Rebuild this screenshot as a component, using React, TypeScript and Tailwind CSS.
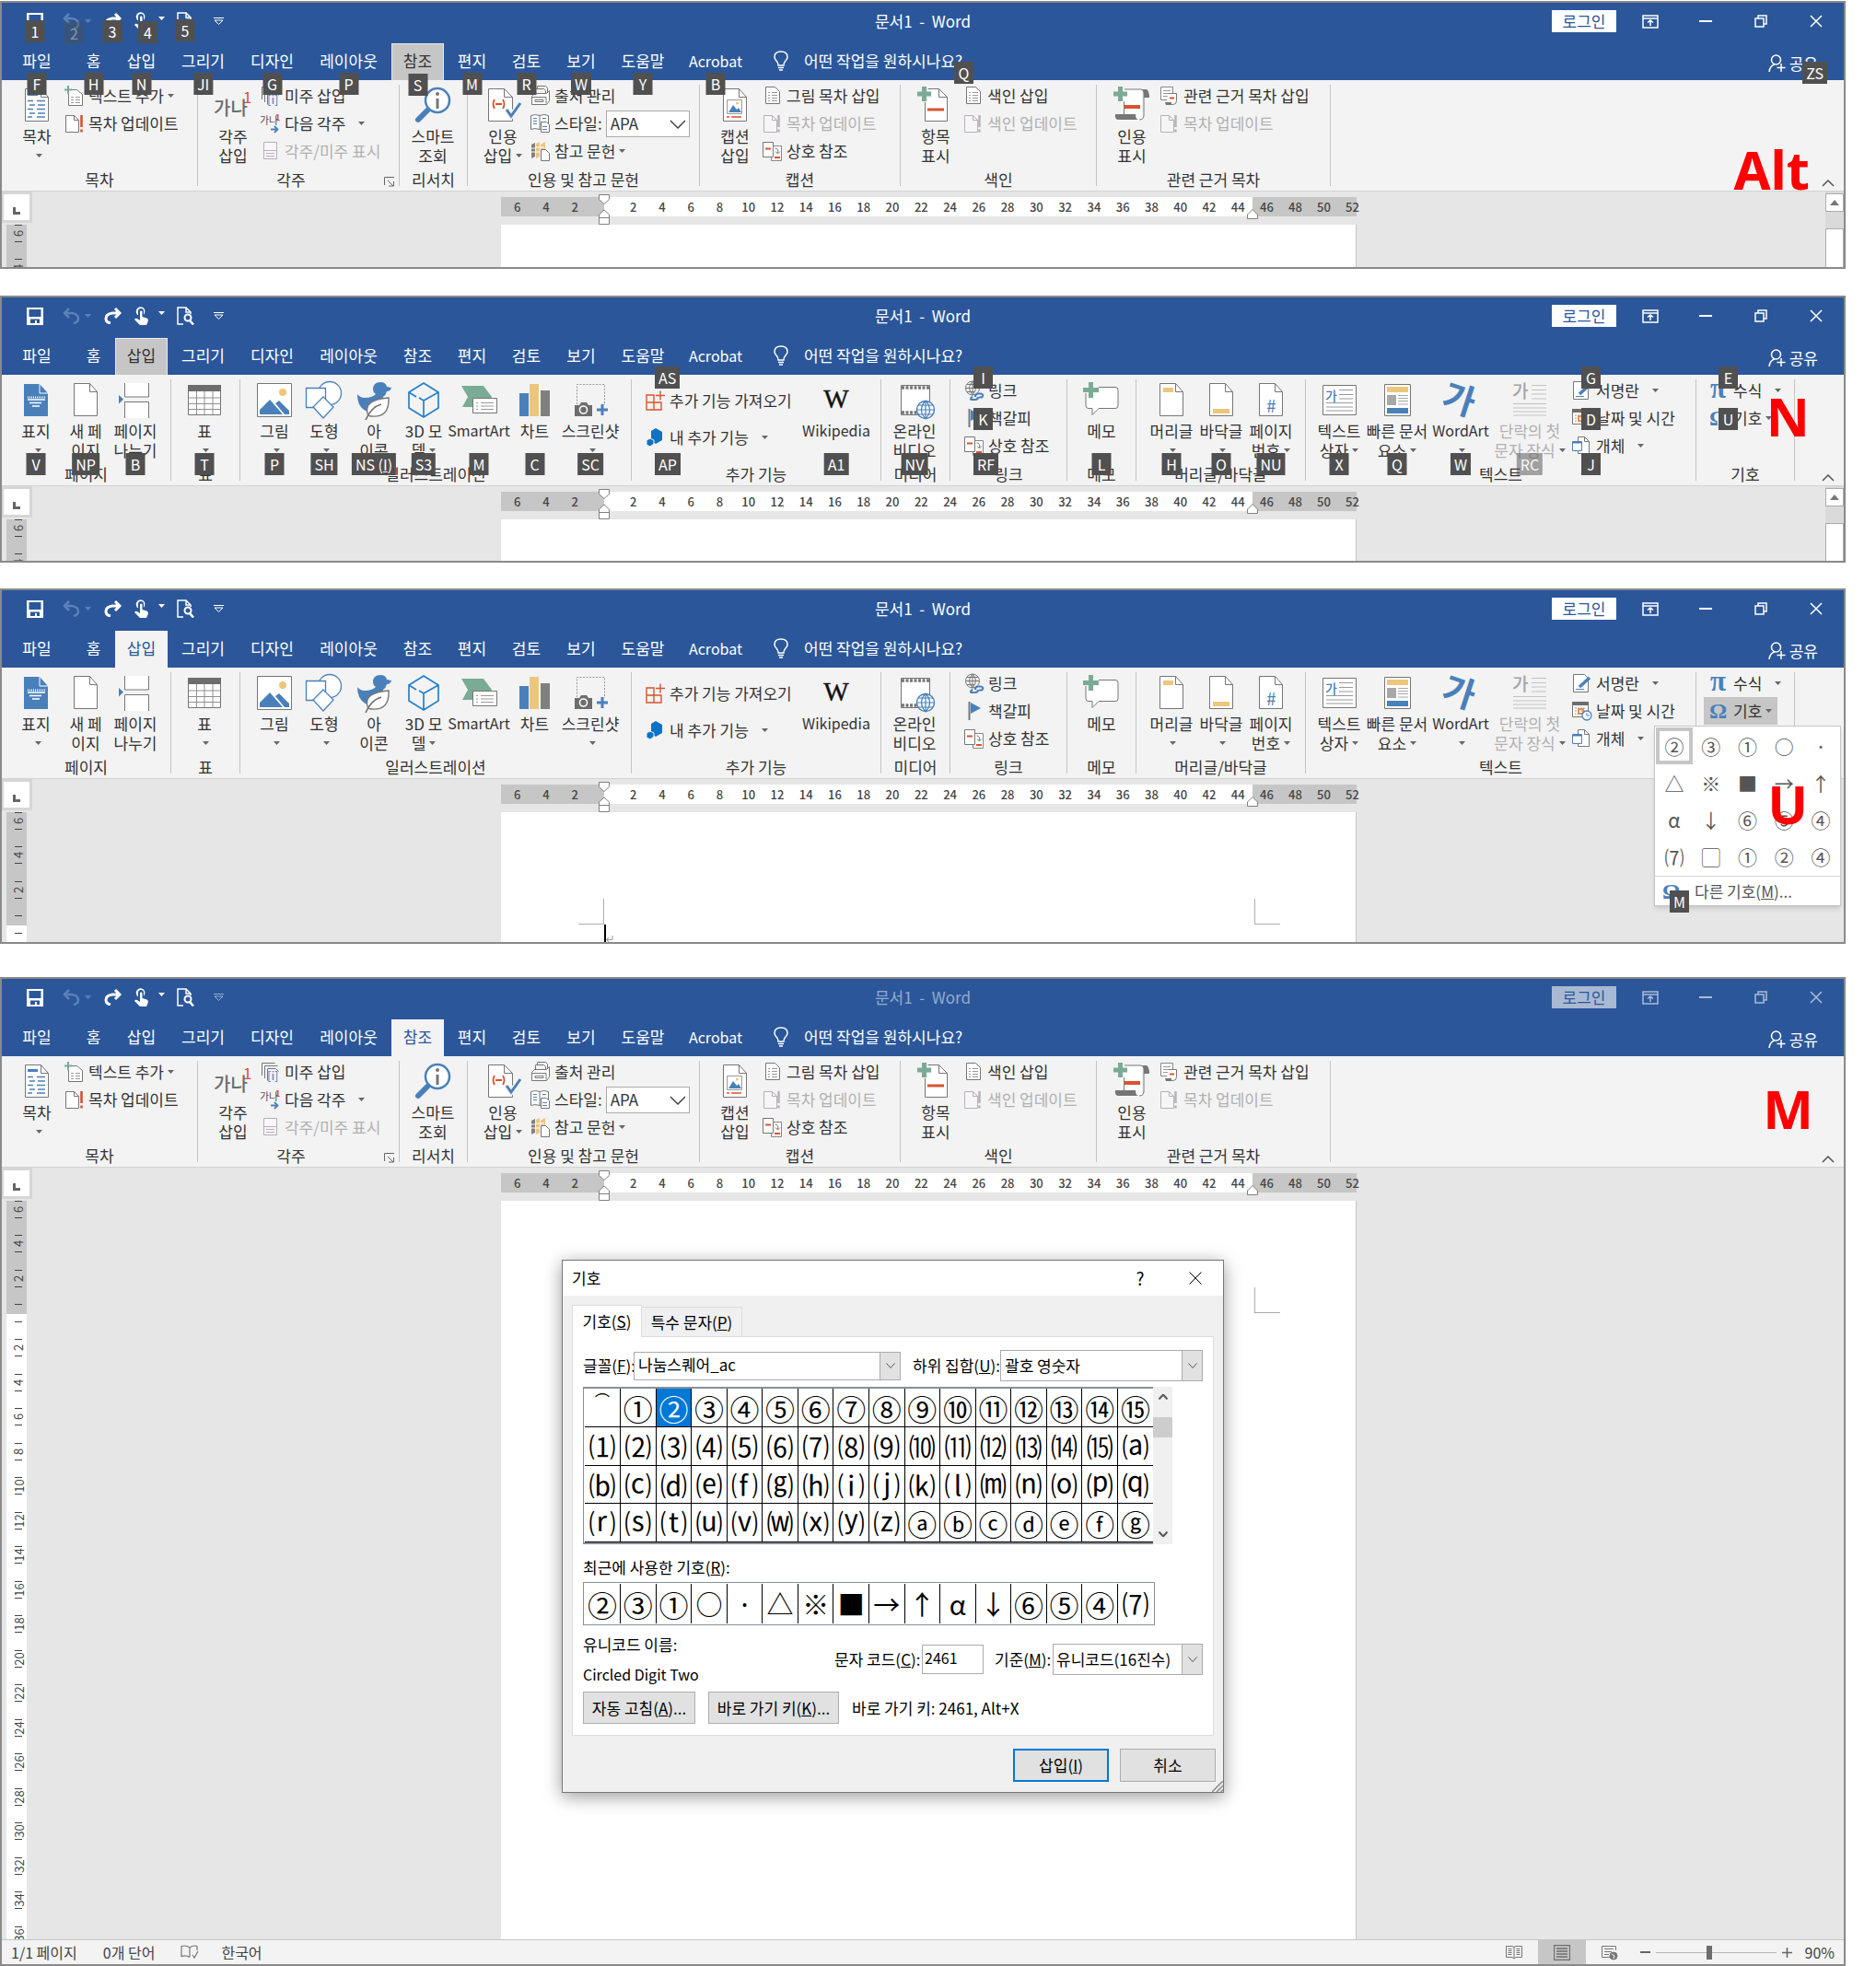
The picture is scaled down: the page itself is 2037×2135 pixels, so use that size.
import type { ReactNode } from "react";

const BLUE = "#4a80ba";
const GRAY = "#767676";
const GREEN = "#7aab95";
const RED = "#d9532f";
const YELLOW = "#edc67c";

const FOLD = "M7.5 2.5h17l8 9v26h-25z";

// 40x40 drawings for the tall ribbon buttons
const big: Record<string, ReactNode> = {
  toc: (
    <g fill="none">
      <path d="M7.5 2.5h17l8 9v26h-25z" fill="#fff" stroke={GRAY} />
      <path d="M24.500 2.500v9h8" stroke={GRAY} />
      <path d="M10 8.500h11" stroke={BLUE} strokeWidth="3" />
      <path d="M10 15.500h6M20 15.500h9M12 20h6M21 20h8M10 24.500h6M20 24.500h9M12 29h6M21 29h8M10 33h5M20 33h9" stroke={BLUE} strokeWidth="1.400" />
    </g>
  ),
  footnote: (
    <g>
      <text x="-1" y="31" fontSize="20" fontWeight="500" fill="#6d6d6d">가나</text>
      <text x="31" y="18" fontSize="17" fill={RED}>1</text>
    </g>
  ),
  lookup: (
    <g fill="none">
      <path d="M4 36 17 23" stroke={BLUE} strokeWidth="6" strokeLinecap="round" />
      <circle cx="25" cy="15" r="13" fill="#fff" stroke={BLUE} strokeWidth="2.500" />
      <path d="M25 13v11" stroke={GRAY} strokeWidth="3" />
      <circle cx="25" cy="8" r="2" fill={GRAY} />
    </g>
  ),
  cite: (
    <g fill="none">
      <path d="M4.500 2.500h17l9 9v26h-26z" fill="#fff" stroke={GRAY} />
      <path d="M21.500 2.500v9h9" stroke={GRAY} />
      <path d="M11 14q-3 5 0 10M20 14q3 5 0 10M12 19h7" stroke={RED} strokeWidth="1.800" />
      <path d="m24 25 5 7 10-14" stroke="#f3f3f3" strokeWidth="6" />
      <path d="m24 25 5 7 10-14" stroke={BLUE} strokeWidth="3" />
    </g>
  ),
  caption: (
    <g fill="none">
      <path d={FOLD} fill="#fff" stroke={GRAY} />
      <path d="M24.500 2.500v9h8" stroke={GRAY} />
      <path d="M11.500 14.500h16v15h-16z" stroke="#999" fill="#fff" />
      <path d="m13 28 5-8 4 5 2-2 3 5z" fill={BLUE} />
      <circle cx="22.500" cy="18" r="1.500" fill={YELLOW} />
      <path d="M11 33h3M16 33h11" stroke={RED} strokeWidth="1.500" />
    </g>
  ),
  mark: (
    <g fill="none">
      <path d="M8.500 2.500h15l9 9v26h-24z" fill="#fff" stroke={GRAY} />
      <path d="M23.500 2.500v9h9" stroke={GRAY} />
      <path d="M-1 8.500H16M8 0v17" stroke="#f3f3f3" strokeWidth="7" />
      <path d="M0 8H15M7.500 0v16" stroke={GREEN} strokeWidth="5" />
      <path d="M11 25h18" stroke={RED} strokeWidth="3" />
    </g>
  ),
  authority: (
    <g fill="none">
      <path d="M11 3h20v28q0 6-5 6H8V3z" fill="#fff" />
      <path d="M11.500 16v15" stroke={GRAY} />
      <path d="M29 3h7q3 2 3 9h-6V6q0-3-4-3z" fill={GRAY} />
      <path d="M2 30h22q0 6 4 6H6q-5 0-4-6z" fill={GRAY} />
      <path d="M12 3h18q3 0 3 4v24q0 5-5 5" stroke={GRAY} />
      <path d="M0 8H15M7.500 0v16" stroke={GREEN} strokeWidth="5" />
      <path d="M12 22h17" stroke={RED} strokeWidth="4" />
    </g>
  ),
  cover: (
    <g fill="none">
      <path d="M7 3h17l9 10v25H7z" fill={BLUE} />
      <path d="M24 3v10h9" stroke="#fff" />
      <path d="M11 17.500h19" stroke="#fff" strokeWidth="2" strokeDasharray="1 1" />
      <path d="M11 20h19M13 23.500h13M16 27h8" stroke="#fff" strokeWidth="1.300" />
    </g>
  ),
  blank: (
    <g fill="none">
      <path d={FOLD} fill="#fff" stroke={GRAY} />
      <path d="M24.500 2.500v9h8" stroke={GRAY} />
    </g>
  ),
  pagebreak: (
    <g fill="none">
      <path d="M8.500 2v15h26V2M8.500 40V22.500h26V40" fill="#fff" stroke={GRAY} />
      <path d="m2 15 5 4.500-5 5z" fill={BLUE} />
    </g>
  ),
  table: (
    <g fill="none">
      <path d="M2.500 4.500h35v32h-35z" fill="#fff" stroke={GRAY} />
      <path d="M2 4h36v7H2z" fill="#6d6d6d" />
      <path d="M11.500 11v25M20 11v25M29 11v25M3 18h34M3 24.500h34M3 30.500h34" stroke="#8f8f8f" />
    </g>
  ),
  picture: (
    <g fill="none">
      <path d="M1.500 2.500h37v36h-37z" fill="#fff" stroke={GRAY} />
      <circle cx="29" cy="12" r="4" fill={YELLOW} />
      <path d="M4 36v-5l11-11 14 16zM21 24l4-3 11 11v4h-5z" fill={BLUE} />
    </g>
  ),
  shapes: (
    <g fill="#fff" stroke={BLUE} strokeWidth="1.300">
      <circle cx="26" cy="13" r="12.500" />
      <path d="M.5 7.500h21v21H.5z" />
      <path d="m19 17 11 11-11 12L8 28z" />
    </g>
  ),
  duck: (
    <g fill="none">
      <path d="M19 9q0-8 8-8 6 0 7 5l5 1q-1 4-5 4-1 4-4 6l-3 14q-6 4-14 2Q2 29 2 14q3 4 8 4 8 0 12-4-3-2-3-5z" fill={BLUE} />
      <path d="M13 35q-4-15 23-17 1 22-19 20-3 0-4-3z" fill="#fff" stroke={GRAY} strokeWidth="1.400" />
      <path d="M11 42q6-14 17-17" stroke={GRAY} strokeWidth="1.800" />
    </g>
  ),
  cube: (
    <path d="m20 2 16 10v17L20 39 4 29V12zM4 12l8 5M36 12l-16 9v18M15 18l5 3" fill="none" stroke="#2480c8" strokeWidth="1.700" />
  ),
  smartart: (
    <g fill="none">
      <path d="M1 5h24l9 12-7 11H2l6-11z" fill={GREEN} />
      <path d="M13.500 18.500h26v16h-26z" fill="#fff" stroke={GRAY} />
      <path d="M17 23.500h2M22 23.500h14M17 27h2M22 27h14M17 30.500h2M22 30.500h14" stroke="#999" />
    </g>
  ),
  chart: (
    <g>
      <path d="M3 13h10v25H3z" fill={BLUE} />
      <path d="M14 3h10v35H14z" fill={YELLOW} />
      <path d="M26 10h10v28H26z" fill="#808080" />
    </g>
  ),
  screenshot: (
    <g fill="none">
      <path d="M5.500 25V3.500h30V26" stroke="#999" strokeDasharray="2 1.500" />
      <path d="M3 26h5l2-3h6l2 3h4v12H3z" fill="#6d6d6d" />
      <circle cx="12.500" cy="31" r="4" stroke="#fff" strokeWidth="1.600" />
      <path d="M27 31h12M33 25v12" stroke={BLUE} strokeWidth="3" />
    </g>
  ),
  wikipedia: <text x="20" y="29" textAnchor="middle" fontSize="29" fontFamily="Liberation Serif, serif" fill="#111" stroke="#111" strokeWidth=".4">W</text>,
  video: (
    <g fill="none">
      <path d="M5.500 4.500h31v32h-31z" fill="#fff" stroke={GRAY} />
      <path d="M6 7h30M6 34h30" stroke="#777" strokeWidth="3.500" strokeDasharray="3 1.500" />
      <circle cx="32" cy="31" r="9.500" fill="#fff" stroke={BLUE} strokeWidth="1.400" />
      <path d="M22 31h20M24 26h16M24 36h16M32 21v20M32 21q-9 10 0 20M32 21q9 10 0 20" stroke={BLUE} strokeWidth="1.200" />
    </g>
  ),
  comment: (
    <g fill="none">
      <path d="M4 6.500h31q3 0 3 3v17q0 3-3 3H17l-7 7v-7H6q-3 0-3-3V9z" fill="#fff" stroke={GRAY} />
      <path d="M-2 9.500H17M8 0v19" stroke="#f3f3f3" strokeWidth="7" />
      <path d="M0 9.500H17M8.500 1v17" stroke={GREEN} strokeWidth="5" />
    </g>
  ),
  header: (
    <g fill="none">
      <path d={FOLD} fill="#fff" stroke={GRAY} />
      <path d="M24.500 2.500v9h8" stroke={GRAY} />
      <path d="M11 7h11v5H11z" fill={YELLOW} />
    </g>
  ),
  footer: (
    <g fill="none">
      <path d={FOLD} fill="#fff" stroke={GRAY} />
      <path d="M24.500 2.500v9h8" stroke={GRAY} />
      <path d="M11 30h18v5H11z" fill={YELLOW} />
    </g>
  ),
  pagenum: (
    <g fill="none">
      <path d={FOLD} fill="#fff" stroke={GRAY} />
      <path d="M24.500 2.500v9h8" stroke={GRAY} />
      <text x="15" y="34" fontSize="19" fill={BLUE}>#</text>
    </g>
  ),
  textbox: (
    <g fill="none">
      <path d="M2.500 4.500h36v32h-36z" fill="#fff" stroke={GRAY} />
      <text x="5" y="21" fontSize="14" fontWeight="500" fill={BLUE}>가</text>
      <path d="M20 9.500h15M20 14.500h15M20 19h15M6 23.500h29M6 28h29M6 32h29" stroke="#999" />
    </g>
  ),
  quick: (
    <g fill="none">
      <path d="M6.500 3.500h28v34h-28z" fill="#fff" stroke={GRAY} />
      <path d="M9 6h23v6H9z" fill={YELLOW} />
      <path d="M9 15h10v11H9z" fill="#a8a8a8" />
      <path d="M9 29h23v6H9z" fill={BLUE} />
      <path d="M21 15.500h11M21 18.500h11M21 21.500h11M21 25h11" stroke="#a8a8a8" />
    </g>
  ),
  wordart: <text x="1" y="34" fontSize="38" fontWeight="700" fill={BLUE} transform="rotate(18 20 20)">가</text>,
  dropcap: (
    <g fill="none">
      <text x="1" y="18" fontSize="19" fontWeight="500" fill="#a5a5a5">가</text>
      <path d="M22 4.500h16M22 9.500h16M22 14h16M22 19h16M2 24.500h36M2 29h36M2 33h36M2 37h36" stroke="#c2c2c2" />
    </g>
  ),
};

// 22x22 drawings for the one-line ribbon buttons
const small: Record<string, ReactNode> = {
  addtext: (
    <g fill="none">
      <path d="M4.500 4.500h9l6 5v12h-15z" fill="#fff" stroke={GRAY} />
      <path d="M7 12.500h3M12 12.500h5M7 15.500h3M12 15.500h5M7 18.500h3M12 18.500h5" stroke="#999" />
      <path d="M0 4.500h8M4 0v9" stroke={GREEN} strokeWidth="2" />
    </g>
  ),
  update: (
    <g fill="none">
      <path d="M1.500 2.500h9l5 5v13h-14z" fill="#fff" stroke={GRAY} />
      <path d="M10.500 2.500v5h5" stroke={GRAY} />
      <path d="M18.500 2v13M18.500 17.500v3" stroke={RED} strokeWidth="2.600" />
    </g>
  ),
  updateOff: (
    <g fill="none">
      <path d="M1.500 2.500h9l5 5v13h-14z" fill="#f8f5f9" stroke="#b5b0b5" />
      <path d="M10.500 2.500v5h5" stroke="#b5b0b5" />
      <path d="M17.500 2v13M17.500 17.500v3" stroke="#b5b0b5" strokeWidth="2.400" />
    </g>
  ),
  endnote: (
    <g fill="none">
      <path d="M1.500 15V1.500h14M4.500 18V4.500h14M7.500 20.500v-13h9l3 3" stroke={GRAY} />
      <text x="7" y="20" fontSize="13" fill={BLUE}>[i]</text>
    </g>
  ),
  nextnote: (
    <g fill="none">
      <text x="-1" y="12" fontSize="11" fill="#555">가나</text>
      <text x="16" y="8" fontSize="9" fontWeight="700" fill={RED}>1</text>
      <path d="M11 17.500h7M15 14l3.500 3.500L15 21" stroke={BLUE} strokeWidth="1.800" />
    </g>
  ),
  shownote: (
    <g fill="none" stroke="#b5b0b5">
      <path d="M3.500 1.500h14v18h-14z" fill="#faf5fa" />
      <path d="M4 10.500h13M6 13.500h9M6 16.500h9" />
    </g>
  ),
  sources: (
    <g fill="none" stroke={GRAY}>
      <path d="M5.500 8V3.500h9l2 2V9M7.500 3V.5h9l2 2V8" />
      <path d="M1.500 11.500l3-3h13l3-3v11l-3 4h-16z" fill="#fff" />
      <path d="M2 12.500h15v7M5 15.500h9v2H5z" />
    </g>
  ),
  style: (
    <g fill="none" stroke={GRAY}>
      <path d="M.5 2.500q5-2 9.500 0 5-2 9.500 0v15q-5-2-9.500 0-5-2-9.500 0zM10 2.500v15" fill="#fff" />
      <path d="M3 5.500h4M3 8.500h4M3 11.500h4M13 5.500h4" stroke={BLUE} />
      <path d="M11.500 9.500h6l3 3v8h-9z" fill="#fff" />
      <path d="M13 14.500h5M13 17.500h5" stroke={BLUE} />
    </g>
  ),
  biblio: (
    <g fill="none">
      <path d="M1 4l4-2v15l-4 2z" fill="#808080" />
      <path d="M6 3l4-2v16l-4 2zM11 4l5-3v9h-5z" fill={YELLOW} />
      <path d="M1 8h4M1 12h4M6 7h9M6 12h4" stroke="#fff" />
      <path d="M11.500 9.500h5l4 4v8h-9z" fill="#fff" stroke={GRAY} />
    </g>
  ),
  list: (
    <g fill="none">
      <path d="M3.500 1.500h10l5 5v13h-15z" fill="#fff" stroke={GRAY} />
      <path d="M6 7.500h2M10 7.500h6M6 10.500h2M10 10.500h6M6 13.500h2M10 13.500h6M6 16.500h2M10 16.500h6" stroke="#999" />
    </g>
  ),
  crossref: (
    <g fill="none">
      <path d="M9.500 5.500h11v16h-11z" fill="#fff" stroke="#888" />
      <path d="M.5 1.500h11v16H.5z" fill="#fff" stroke={GRAY} />
      <path d="M3 8.500h6M13 18h6" stroke={RED} strokeWidth="2" />
      <path d="M13.500 8q4 0 3 5M14 11.500l2.500 2.500 2.500-2.500" stroke={GRAY} />
    </g>
  ),
  authtable: (
    <g fill="none">
      <path d="M1.500 1.500h13v14h-13z" fill="#fff" stroke="#888" />
      <path d="M4 5.500h8M4 8.500h6M4 11.500h5" stroke="#999" />
      <path d="M9.500 8.500h9v8q0 4-4 4h-7" fill="#fff" stroke={GRAY} />
      <path d="M11 13.500h5" stroke={RED} strokeWidth="2" />
      <path d="M6 18h7v3H7z" fill={GRAY} />
    </g>
  ),
  store: (
    <g fill="none" stroke={RED} strokeWidth="1.400">
      <path d="M1 5h8v16H1zM1 13h16v8H1zM9 13v8M9 5v8" />
      <path d="M11 5.500h10M16 .5v10" />
    </g>
  ),
  myaddin: (
    <g fill="#0f72c4">
      <path d="m11 1 7 4v9l-7 4-5-3V4z" />
      <path d="m5 12 4 2v4l-4 3-4-2v-5z" stroke="#f3f3f3" />
    </g>
  ),
  link: (
    <g fill="none">
      <circle cx="9" cy="8.500" r="7.500" stroke={GRAY} />
      <path d="M1.500 8.500h15M3 4.500h12M3 12.500h8M9 1v14M9 1q-7 7 0 15M9 1q7 7 0 15" stroke={GRAY} />
      <path d="M9 17.500q-4 3.500 0 3.500h3q3 0 3-3M15 14.500h3q4 1 1 4l-3 0M12 18q0-3.500 3-3.500" stroke={BLUE} strokeWidth="2.200" />
    </g>
  ),
  bookmark: (
    <g>
      <path d="M5.500 1v20" stroke={GRAY} strokeWidth="2" />
      <path d="m7 2 11 6-11 6z" fill={BLUE} />
    </g>
  ),
  sign: (
    <g fill="none">
      <path d="M1.500 1.500h12l4 4v15h-16z" fill="#fff" stroke={GRAY} />
      <path d="M4 17.500h9" stroke={BLUE} />
      <path d="M8 15 19 5" stroke={BLUE} strokeWidth="3.500" />
    </g>
  ),
  date: (
    <g fill="none">
      <path d="M.5 1.500h17v16H.5z" fill="#fff" stroke={GRAY} />
      <path d="M0 1h18v4H0z" fill="#6d6d6d" />
      <path d="M3 8h12M3 11h12M3 14h12" stroke="#999" strokeDasharray="2 1" />
      <path d="M7 9h5v5H7z" stroke="#e87722" strokeWidth="1.500" />
      <circle cx="16" cy="16" r="5" fill="#fff" stroke={BLUE} strokeWidth="1.300" />
      <path d="M16 13v3h3" stroke={BLUE} />
    </g>
  ),
  object: (
    <g fill="none">
      <path d="M6.500 1.500h7l5 5v13h-12z" fill="#fff" stroke={GRAY} />
      <path d="M13.500 1.500v5h5" stroke={GRAY} />
      <path d="M.5 6.500h10v10H.5z" fill="#fff" stroke={BLUE} />
      <path d="M1 7.500h9" stroke={BLUE} strokeWidth="2" />
    </g>
  ),
  pi: <text x="1" y="19" fontSize="31" fontWeight="700" fontFamily="Liberation Serif, serif" fill={BLUE}>π</text>,
  omega: <text x="0" y="19" fontSize="24" fontWeight="700" fontFamily="Liberation Serif, serif" fill={BLUE}>Ω</text>,
};

function Big({ name }: { name: string }) {
  return <svg viewBox="0 0 40 40" className="h-10 w-10 shrink-0 overflow-visible" aria-hidden="true">{big[name]}</svg>;
}

function Small({ name }: { name: string }) {
  return <svg viewBox="0 0 22 22" className="h-[22px] w-[22px] shrink-0 overflow-visible" aria-hidden="true">{small[name]}</svg>;
}

function Caret({ className = "" }: { className?: string }) {
  return (
    <svg viewBox="0 0 7 4" className={`inline-block h-1 w-[7px] shrink-0 fill-current ${className}`} aria-hidden="true">
      <path d="M0 0h7L3.500 4z" />
    </svg>
  );
}

function KeyTip({ text, className = "" }: { text: ReactNode; className?: string }) {
  return (
    <kbd className={`absolute z-20 flex h-6 min-w-[21px] items-center justify-center whitespace-nowrap bg-[#505050] px-1 font-[inherit] text-base leading-6 text-white ${className}`}>
      {text}
    </kbd>
  );
}

// Latin captions are set one size down next to Hangul ones
const isLatin = (s: string) => /^[A-Za-z]+$/.test(s);

type LargeProps = { icon: string; lines: string[]; caret?: boolean; off?: boolean; tip?: ReactNode; width?: string };

function LargeButton({ icon, lines, caret, off, tip, width = "w-[60px]" }: LargeProps) {
  return (
    <button type="button" disabled={off} className={`relative flex h-[98px] shrink-0 flex-col items-center pt-[7px] ${width} ${off ? "text-[#b1b1b1]" : "text-[#333]"}`}>
      <Big name={icon} />
      <span className="mt-[3px] flex flex-col items-center whitespace-nowrap text-[17px] leading-[21px]">
        {lines.map((line, i) => (
          <span key={line} className={`flex items-center gap-1 ${isLatin(line) ? "text-base leading-[21px]" : ""}`}>
            {line}
            {caret && lines.length > 1 && i === lines.length - 1 && <Caret className="text-[#666]" />}
          </span>
        ))}
        {caret && lines.length === 1 && <span className="flex h-[21px] items-center pl-1"><Caret className="text-[#666]" /></span>}
      </span>
      {tip && <KeyTip text={tip} className={`top-[85px] left-1/2 -translate-x-1/2 ${off ? "opacity-50" : ""}`} />}
    </button>
  );
}

type SmallProps = { icon: string; label: string; caret?: "near" | "far"; off?: boolean; active?: boolean; tip?: string; tipClass?: string; tall?: boolean };

function SmallButton({ icon, label, caret, off, active, tip, tipClass = "", tall }: SmallProps) {
  return (
    <button type="button" disabled={off} className={`relative flex items-center gap-1 self-start whitespace-nowrap text-[17px] ${tall ? "h-10" : "h-[30px]"} ${off ? "text-[#b1b1b1]" : "text-[#333]"} ${active ? "-mx-1.5 bg-[#c6c6c6] px-1.5" : ""}`}>
      <Small name={icon} />
      <span>{label}</span>
      {caret && <Caret className={`text-[#666] ${caret === "far" ? "ml-2.5" : ""}`} />}
      {tip && <KeyTip text={tip} className={`left-2.5 ${tipClass}`} />}
    </button>
  );
}

function Group({ label, width, pad = "pl-2", launcher, children }: { label: string; width: string; pad?: string; launcher?: boolean; children: ReactNode }) {
  return (
    <section className={`relative flex shrink-0 ${width}`} aria-label={label}>
      <div className="flex min-w-0 flex-1 flex-col">
        <div className={`flex h-[98px] ${pad}`}>{children}</div>
        <div className="flex h-5 items-center text-[17px] text-[#333]">
          <span className="flex-1 whitespace-nowrap text-center">{label}</span>
          {launcher && (
            <button type="button" aria-label={`${label} 설정`} className="mt-1 mr-0.5 h-[14px] w-[14px]">
              <svg viewBox="0 0 12 12" className="h-3 w-3 fill-none stroke-[#666]"><path d="M.5 10V1.500H11M4 5l6 6M10.500 6v5H5" /></svg>
            </button>
          )}
        </div>
      </div>
      <div className="mt-[5px] h-[110px] w-px bg-[#c4c4c4]" />
    </section>
  );
}

function Col({ children, className = "pt-0.5" }: { children: ReactNode; className?: string }) {
  return <div className={`flex flex-col ${className}`}>{children}</div>;
}

function References({ id }: { id: string }) {
  return (
    <>
      <Group label="목차" width="w-[213px]">
        <LargeButton icon="toc" lines={["목차"]} caret />
        <Col>
          <SmallButton icon="addtext" label="텍스트 추가" caret="near" />
          <SmallButton icon="update" label="목차 업데이트" />
        </Col>
      </Group>
      <Group label="각주" width="w-[219px]" launcher>
        <LargeButton icon="footnote" lines={["각주", "삽입"]} />
        <Col>
          <SmallButton icon="endnote" label="미주 삽입" />
          <SmallButton icon="nextnote" label="다음 각주" caret="far" />
          <SmallButton icon="shownote" label="각주/미주 표시" off />
        </Col>
      </Group>
      <Group label="리서치" width="w-[74px]" pad="pl-1.5">
        <LargeButton icon="lookup" lines={["스마트", "조회"]} />
      </Group>
      <Group label="인용 및 참고 문헌" width="w-[252px]">
        <LargeButton icon="cite" lines={["인용", "삽입"]} caret />
        <Col>
          <SmallButton icon="sources" label="출처 관리" />
          <div className="flex h-[30px] items-center gap-1 text-[17px] text-[#333]">
            <Small name="style" />
            <label htmlFor={id} className="whitespace-nowrap">스타일:</label>
            <span className="relative">
              <select id={id} className="h-[29px] w-[91px] appearance-none border border-[#ababab] bg-white px-1">
                <option>APA</option>
              </select>
              <svg viewBox="0 0 18 10" className="pointer-events-none absolute top-2.5 right-1 h-2.5 w-[18px] fill-none stroke-[#444] stroke-[1.5]"><path d="m1 1 8 8 8-8" /></svg>
            </span>
          </div>
          <SmallButton icon="biblio" label="참고 문헌" caret="near" />
        </Col>
      </Group>
      <Group label="캡션" width="w-[218px]">
        <LargeButton icon="caption" lines={["캡션", "삽입"]} />
        <Col>
          <SmallButton icon="list" label="그림 목차 삽입" />
          <SmallButton icon="updateOff" label="목차 업데이트" off />
          <SmallButton icon="crossref" label="상호 참조" />
        </Col>
      </Group>
      <Group label="색인" width="w-[213px]">
        <LargeButton icon="mark" lines={["항목", "표시"]} />
        <Col>
          <SmallButton icon="list" label="색인 삽입" />
          <SmallButton icon="updateOff" label="색인 업데이트" off />
        </Col>
      </Group>
      <Group label="관련 근거 목차" width="w-[254px]">
        <LargeButton icon="authority" lines={["인용", "표시"]} />
        <Col>
          <SmallButton icon="authtable" label="관련 근거 목차 삽입" />
          <SmallButton icon="updateOff" label="목차 업데이트" off />
        </Col>
      </Group>
    </>
  );
}

const popupSymbols = ["②", "③", "①", "○", "·", "△", "※", "■", "→", "↑", "α", "↓", "⑥", "⑤", "④", "⑺", "▢", "①", "②", "④"];

function SymbolMenu() {
  return (
    <div className="absolute top-[63px] -left-[46px] z-30 w-[203px] border border-[#c6c6c6] bg-white shadow-md">
      <div className="grid grid-cols-5 p-px">
        {popupSymbols.map((s, i) => (
          <button key={i} type="button" className={`flex h-10 items-center justify-center text-[21px] leading-none text-[#555] ${i === 0 ? "border-4 border-[#c6c6c6]" : ""}`}>{s}</button>
        ))}
      </div>
      <button type="button" className="relative flex h-8 w-full items-center gap-[13px] border-t border-[#d6d6d6] pl-2 text-[17px] text-[#555]">
        <Small name="omega" />
        <span>다른 기호(<u>M</u>)...</span>
        <KeyTip text="M" className="top-[15px] left-4" />
      </button>
    </div>
  );
}

function Insert({ tips, open }: { tips?: boolean; open?: boolean }) {
  const t = (s: ReactNode) => (tips ? s : undefined);
  const k = (s: string) => (tips ? s : undefined);
  return (
    <>
      <Group label="페이지" width="w-[184px]" pad="pl-2.5">
        <LargeButton icon="cover" lines={["표지"]} caret tip={t("V")} width="w-[54px]" />
        <LargeButton icon="blank" lines={["새 페", "이지"]} tip={t("NP")} width="w-[54px]" />
        <LargeButton icon="pagebreak" lines={["페이지", "나누기"]} tip={t("B")} width="w-[54px]" />
      </Group>
      <Group label="표" width="w-[75px]" pad="pl-1.5">
        <LargeButton icon="table" lines={["표"]} caret tip={t("T")} />
      </Group>
      <Group label="일러스트레이션" width="w-[425px]" pad="pl-2.5">
        <LargeButton icon="picture" lines={["그림"]} caret tip={t("P")} width="w-[54px]" />
        <LargeButton icon="shapes" lines={["도형"]} caret tip={t("SH")} width="w-[54px]" />
        <LargeButton icon="duck" lines={["아", "이콘"]} tip={t(<>NS (<u>I</u>)</>)} width="w-[54px]" />
        <LargeButton icon="cube" lines={["3D 모", "델"]} caret tip={t("S3")} width="w-[54px]" />
        <LargeButton icon="smartart" lines={["SmartArt"]} tip={t("M")} width="w-[66px]" />
        <LargeButton icon="chart" lines={["차트"]} tip={t("C")} width="w-[55px]" />
        <LargeButton icon="screenshot" lines={["스크린샷"]} caret tip={t("SC")} width="w-[66px]" />
      </Group>
      <Group label="추가 기능" width="w-[271px]" pad="pl-[15px]">
        <Col className="w-[174px] pt-2">
          <SmallButton icon="store" label="추가 기능 가져오기" tall tip={k("AS")} tipClass="-top-[17px]" />
          <SmallButton icon="myaddin" label="내 추가 기능" caret="far" tall tip={k("AP")} tipClass="top-[37px]" />
        </Col>
        <LargeButton icon="wikipedia" lines={["Wikipedia"]} tip={t("A1")} width="w-[66px]" />
      </Group>
      <Group label="미디어" width="w-[75px]" pad="pl-1.5">
        <LargeButton icon="video" lines={["온라인", "비디오"]} tip={t("NV")} />
      </Group>
      <Group label="링크" width="w-[127px]" pad="pl-[15px]">
        <Col className="pt-0.5">
          <SmallButton icon="link" label="링크" tip={k("I")} tipClass="-top-[11px]" />
          <SmallButton icon="bookmark" label="책갈피" tip={k("K")} tipClass="top-1" />
          <SmallButton icon="crossref" label="상호 참조" tip={k("RF")} tipClass="top-[23px]" />
        </Col>
      </Group>
      <Group label="메모" width="w-[75px]" pad="pl-[7px]">
        <LargeButton icon="comment" lines={["메모"]} tip={t("L")} />
      </Group>
      <Group label="머리글/바닥글" width="w-[184px]" pad="pl-[11px]">
        <LargeButton icon="header" lines={["머리글"]} caret tip={t("H")} width="w-[54px]" />
        <LargeButton icon="footer" lines={["바닥글"]} caret tip={t("O")} width="w-[54px]" />
        <LargeButton icon="pagenum" lines={["페이지", "번호"]} caret tip={t("NU")} width="w-[54px]" />
      </Group>
      <Group label="텍스트" width="w-[424px]" pad="pl-[9px]">
        <LargeButton icon="textbox" lines={["텍스트", "상자"]} caret tip={t("X")} width="w-[54px]" />
        <LargeButton icon="quick" lines={["빠른 문서", "요소"]} caret tip={t("Q")} width="w-[72px]" />
        <LargeButton icon="wordart" lines={["WordArt"]} caret tip={t("W")} width="w-[66px]" />
        <LargeButton icon="dropcap" lines={["단락의 첫", "문자 장식"]} caret off tip={t("RC")} width="w-[84px]" />
        <Col className="pt-0.5 pl-1">
          <SmallButton icon="sign" label="서명란" caret="far" tip={k("G")} tipClass="-top-[11px]" />
          <SmallButton icon="date" label="날짜 및 시간" tip={k("D")} tipClass="top-1" />
          <SmallButton icon="object" label="개체" caret="far" tip={k("J")} tipClass="top-[23px]" />
        </Col>
      </Group>
      <Group label="기호" width="w-[107px]" pad="pl-[14px]">
        <Col className="pt-0.5">
          <SmallButton icon="pi" label="수식" caret="far" tip={k("E")} tipClass="-top-[11px]" />
          <SmallButton icon="omega" label="기호" caret="near" active={open} tip={k("U")} tipClass="top-1" />
        </Col>
        {open && <SymbolMenu />}
      </Group>
    </>
  );
}

type Tab = { name: string; width: string; tip: string };

const tabs: Tab[] = [
  { name: "파일", width: "w-[76px]", tip: "F" },
  { name: "홈", width: "w-[43px]", tip: "H" },
  { name: "삽입", width: "w-[57px]", tip: "N" },
  { name: "그리기", width: "w-[73px]", tip: "JI" },
  { name: "디자인", width: "w-[73px]", tip: "G" },
  { name: "레이아웃", width: "w-[89px]", tip: "P" },
  { name: "참조", width: "w-[57px]", tip: "S" },
  { name: "편지", width: "w-[57px]", tip: "M" },
  { name: "검토", width: "w-[57px]", tip: "R" },
  { name: "보기", width: "w-[58px]", tip: "W" },
  { name: "도움말", width: "w-[72px]", tip: "Y" },
  { name: "Acrobat", width: "w-[82px]", tip: "B" },
];

function QuickAccess({ tips, inactive }: { tips?: boolean; inactive?: boolean }) {
  return (
    <div className="flex h-full flex-1 items-center text-white">
      <button type="button" aria-label="저장" className="relative ml-3 flex w-12 justify-center">
        <svg viewBox="0 0 18 19" className="h-[19px] w-[18px]"><path d="M0 0h18v19H0zM2.500 2v8h13V2zM4 12.500V17h5v-3h2v3h3v-4.500z" fill="currentColor" fillRule="evenodd" /></svg>
        {tips && <KeyTip text="1" className="top-2 left-1/2 -translate-x-1/2" />}
      </button>
      <button type="button" aria-label="실행 취소" disabled className="relative flex w-[30px] justify-center text-[#5d80b9]">
        <svg viewBox="0 0 19 18" className="h-[18px] w-[19px] fill-none stroke-current stroke-[2.500]"><path d="M7 1 2 6l5 5M2 6h8q7 1 7 6 0 4-5 5" /></svg>
        {tips && <KeyTip text="2" className="top-2.5 left-2 bg-[#505050]/40 text-white/40" />}
      </button>
      <span className="w-2 text-[#5d80b9]"><Caret className="mb-1.5" /></span>
      <button type="button" aria-label="다시 실행" className="relative flex w-11 justify-center">
        <svg viewBox="0 0 19 18" className="h-[18px] w-[19px] fill-none stroke-current stroke-[3]"><path d="m12 1 5 5-5 5M17 6H9Q2 7 2 12q0 4 5 5" /></svg>
        {tips && <KeyTip text="3" className="top-2 left-1/2 -translate-x-1/2" />}
      </button>
      <button type="button" aria-label="터치/마우스 모드" className="relative flex w-5 justify-center">
        <svg viewBox="0 0 16 20" className="h-5 w-4 fill-current"><path d="M3 9Q0 4 4 1q5-2 7 2 1 3-1 6V5q0-3-3-3T4 5v4z" /><path d="M6 5q1-1 2.500 0v6l5 1.500q2 1 1 4L13 20H6l-6-6q1-2 3-1l3 2z" /></svg>
        {tips && <KeyTip text="4" className="top-2.5 left-1.5" />}
      </button>
      <span className="flex w-[22px] justify-center"><Caret className="mb-1.5" /></span>
      <button type="button" aria-label="인쇄 미리 보기" className="relative flex w-[30px] justify-center">
        <svg viewBox="0 0 19 20" className="h-5 w-[19px] fill-none stroke-current stroke-[1.500]"><path d="M7 19H1V1h9l5 5v2M10 1v5h4" /><circle cx="12" cy="12" r="3.500" strokeWidth="2" /><path d="m14 15 4 4.500" strokeWidth="2.500" /></svg>
        {tips && <KeyTip text="5" className="top-2 left-1/2 -translate-x-1/2" />}
      </button>
      <button type="button" aria-label="빠른 실행 도구 모음 사용자 지정" className={`flex w-[42px] justify-center ${inactive ? "text-white/50" : ""}`}>
        <svg viewBox="0 0 11 8" className="h-2 w-[11px] fill-none stroke-current"><path d="M0 .5h11M1 3h9L5.500 7.500z" /></svg>
      </button>
    </div>
  );
}

function TitleBar({ tips, inactive }: { tips?: boolean; inactive?: boolean }) {
  const control = "flex h-full w-[60px] items-center justify-center";
  return (
    <header className="flex h-11 items-center bg-[#2b579a] pb-1 text-[17px] text-white">
      <QuickAccess tips={tips} inactive={inactive} />
      <h2 className={`whitespace-pre pb-px text-center ${inactive ? "text-white/50" : ""}`}>{"문서1  -  Word"}</h2>
      <div className={`flex h-full flex-1 items-center justify-end ${inactive ? "text-white/60" : ""}`}>
        <button type="button" className={`mr-[7px] flex h-6 w-[70px] items-center justify-center pb-px leading-6 text-[#2b579a] ${inactive ? "bg-[#a9b9d3]" : "bg-white"}`}>로그인</button>
        <button type="button" aria-label="리본 메뉴 표시 옵션" className={control}>
          <svg viewBox="0 0 18 15" className="h-[15px] w-[18px] fill-none stroke-current stroke-[1.500]"><path d="M1 1h16v13H1zM1 4h16M9 12V6M6 8.500 9 6l3 2.500" /></svg>
        </button>
        <button type="button" aria-label="최소화" className={control}><span className="h-[2px] w-[14px] bg-current" /></button>
        <button type="button" aria-label="이전 크기로 복원" className={control}>
          <svg viewBox="0 0 14 14" className="h-[14px] w-[14px] fill-none stroke-current stroke-[1.500]"><path d="M1 4h9v9H1zM4 4V1h9v9h-3" /></svg>
        </button>
        <button type="button" aria-label="닫기" className={control}>
          <svg viewBox="0 0 14 14" className="h-[14px] w-[14px] fill-none stroke-current stroke-[1.500]"><path d="m1 1 12 12M13 1 1 13" /></svg>
        </button>
      </div>
    </header>
  );
}

function TabRow({ active, pressed, tips }: { active: string; pressed?: boolean; tips?: boolean }) {
  return (
    <nav className="flex h-10 gap-0.5 bg-[#2b579a] text-[17px] text-white">
      {tabs.map((tab) => {
        const look = tab.name !== active ? "" : pressed ? "border border-b-0 border-[#e8e8e8] bg-[#c6c6c6] text-[#333]" : "bg-[#f3f3f3] text-[#2b579a]";
        return (
          <button key={tab.name} type="button" className={`relative flex shrink-0 items-center justify-center pb-[3px] ${tab.width} ${isLatin(tab.name) ? "text-base" : ""} ${look}`}>
            {tab.name}
            {tips && <KeyTip text={tab.tip} className="top-8 left-1/2 -translate-x-1/2" />}
          </button>
        );
      })}
      <label className="relative ml-5 flex items-center gap-[17px] pb-[3px]">
        <svg viewBox="0 0 16 22" className="h-[22px] w-4 fill-none stroke-current stroke-[1.500]"><path d="M5 16q0-3-2-5Q1 9 1 7q0-6 7-6t7 6q0 2-2 4t-2 5zM5 18.500h6M6 21h4" /></svg>
        <input type="text" aria-label="어떤 작업을 원하시나요?" placeholder="어떤 작업을 원하시나요?" className="w-[184px] bg-transparent placeholder:text-white" />
        {tips && <KeyTip text="Q" className="top-5 right-0" />}
      </label>
      <button type="button" className="relative mt-1 ml-auto flex items-center gap-1 pr-7">
        <svg viewBox="0 0 19 20" className="h-5 w-[19px] fill-none stroke-current stroke-[1.500]"><circle cx="8.500" cy="6" r="5" /><path d="M1 19q1-7 6-8M14 10v9M9.500 14.500h9" /></svg>
        공유
        {tips && <KeyTip text="ZS" className="top-4 right-[18px]" />}
      </button>
    </nav>
  );
}

function RulerCells({ from, to, className, cell = "flex-1" }: { from: number; to: number; className: string; cell?: string }) {
  const step = from <= to ? 2 : -2;
  const nums = Array.from({ length: Math.abs(to - from) / 2 + 1 }, (_, i) => from + i * step);
  return (
    <div className={`flex items-center ${className}`}>
      {nums.map((n) => <span key={n} className={`text-center ${cell}`}>{n}</span>)}
    </div>
  );
}

function HorizontalRuler() {
  return (
    <div className="relative mt-1.5 flex h-[21px] w-[929px] text-[13px] leading-none font-medium text-[#444]">
      <RulerCells from={6} to={2} className="w-28 bg-[#c6c6c6] pr-4 pl-0.5" />
      <RulerCells from={2} to={44} className="w-[704px] bg-white pl-4" />
      <RulerCells from={46} to={52} className="w-[113px] bg-[#c6c6c6]" cell="w-[31px] shrink-0" />
      <svg viewBox="0 0 12 33" className="absolute -top-[3px] left-[106px] h-[33px] w-3 fill-white stroke-[#808080]">
        <path d="M.5.5h11v5L6 10.500.5 5.500zM6 17l5.500 5v10.500H.5V22zM.5 25.500h11" />
      </svg>
      <svg viewBox="0 0 12 11" className="absolute top-[13px] left-[810px] h-[11px] w-3 fill-white stroke-[#808080]">
        <path d="M6 .5 11.500 6v4.500H.5V6z" />
      </svg>
    </div>
  );
}

function VerticalCell({ n }: { n?: number }) {
  return (
    <div className="flex min-h-[37px] flex-1 flex-col items-center pl-1">
      <span className="h-px w-2 shrink-0 bg-[#444]" />
      <span className="flex h-[17px] items-center justify-center">
        {n !== undefined && <span className="-rotate-90 text-[13px] leading-none">{n}</span>}
      </span>
      <span className="h-px w-2 shrink-0 bg-[#444]" />
    </div>
  );
}

function VerticalRuler({ full }: { full?: boolean }) {
  return (
    <div className="ml-[5px] flex w-[22px] flex-col text-[#444]">
      <div className="flex h-[123px] shrink-0 flex-col bg-[#c6c6c6]">
        <VerticalCell n={6} />
        <VerticalCell n={4} />
        <VerticalCell n={2} />
        <div className="flex h-[11px] shrink-0 justify-center pl-1"><span className="h-px w-2 bg-[#444]" /></div>
      </div>
      <div className="flex flex-1 flex-col bg-white">
        <div className="flex h-[27px] shrink-0 justify-center pt-2 pl-1"><span className="h-px w-2 bg-[#444]" /></div>
        {full && (
          <div className="flex h-[675px] flex-col">
            {Array.from({ length: 18 }, (_, i) => <VerticalCell key={i} n={2 + i * 2} />)}
          </div>
        )}
      </div>
    </div>
  );
}

type WindowProps = {
  active: string;
  pressed?: boolean;
  tabTips?: boolean;
  inactive?: boolean;
  scrollbar?: boolean;
  collapse?: boolean;
  marks?: boolean;
  caret?: boolean;
  fullRuler?: boolean;
  pageHeight: string;
  ribbon: ReactNode;
  status?: ReactNode;
  children?: ReactNode;
};

function WordWindow(p: WindowProps) {
  return (
    <article className="relative border-2 border-[#8a8a8a] bg-[#e6e6e6]">
      <TitleBar tips={p.tabTips} inactive={p.inactive} />
      <TabRow active={p.active} pressed={p.pressed} tips={p.tabTips} />
      <div className="flex h-[121px] border-b border-[#d2d2d2] bg-[#f3f3f3]">
        {p.ribbon}
        {p.collapse && (
          <button type="button" aria-label="리본 메뉴 축소" className="mr-2.5 mb-1 ml-auto self-end">
            <svg viewBox="0 0 14 8" className="h-2 w-[14px] fill-none stroke-[#555] stroke-[1.500]"><path d="m1 7 6-6 6 6" /></svg>
          </button>
        )}
      </div>
      <div className={`flex overflow-hidden ${p.pageHeight}`}>
        <div className="flex w-[33px] shrink-0 flex-col">
          <div className="mb-0.5 flex h-[34px] items-center justify-center border-[3px] border-l-2 border-[#d6d6d6] bg-white">
            <span className="mt-2 h-2 w-2 border-b-[3px] border-l-[3px] border-[#666]" />
          </div>
          <div className="flex min-h-0 flex-1"><VerticalRuler full={p.fullRuler} /></div>
        </div>
        <div className="flex min-w-0 flex-1 flex-col items-center">
          <div className="h-9 shrink-0"><HorizontalRuler /></div>
          <div className="flex w-[929px] flex-1 justify-between border-r border-[#c6c6c6] bg-white bg-clip-padding pt-[94px] pr-[82px] pl-[84px]">
            {p.marks && (
              <>
                <div>
                  <div className="h-7 w-7 border-r border-b border-[#ababab]" />
                  {p.caret && (
                    <div className="ml-7 flex items-end">
                      <span className="h-[19px] w-0.5 bg-black" />
                      <svg viewBox="0 0 8 7" className="h-[7px] w-2 fill-none stroke-[#999]"><path d="M7 0v4.500H1M3 2 .5 4.500 3 7" /></svg>
                    </div>
                  )}
                </div>
                <div className="h-7 w-7 border-b border-l border-[#ababab]" />
              </>
            )}
          </div>
        </div>
        <div className="w-5 shrink-0">
          {p.scrollbar && (
            <div className="flex h-full flex-col bg-[#dadada] pt-0.5">
              <button type="button" aria-label="위로 스크롤" className="flex h-5 items-center justify-center border border-[#ababab] bg-white">
                <svg viewBox="0 0 10 6" className="h-1.5 w-2.5 fill-[#777]"><path d="M0 6h10L5 0z" /></svg>
              </button>
              <div className="mt-[18px] flex-1 border border-b-0 border-[#ababab] bg-white" />
            </div>
          )}
        </div>
      </div>
      {p.status}
      {p.children}
    </article>
  );
}

function StatusBar() {
  return (
    <footer className="flex h-[27px] items-center border-t border-[#c6c6c6] bg-[#f3f3f3] text-base text-[#444]">
      <span className="ml-2.5">1/1 페이지</span>
      <span className="ml-7">0개 단어</span>
      <svg viewBox="0 0 20 16" className="ml-7 h-4 w-5 fill-none stroke-[#777] stroke-[1.200]"><path d="M10 3Q6 0 1 1.500v11q5-1.500 9 1M10 3v10M10 3q4-3 8-1.500V6M13 11l2 3 4-7" /></svg>
      <span className="ml-6">한국어</span>
      <div className="ml-auto flex h-full items-center">
        <button type="button" aria-label="읽기 모드" className="flex w-[52px] justify-center">
          <svg viewBox="0 0 18 16" className="h-4 w-[18px] fill-none stroke-[#777]"><path d="M.5 1.500H7l2 1 2-1h6.500v12H11l-2 1.500-2-1.500H.5zM9 2v13M2.500 4.500h4M2.500 6.500h4M2.500 8.500h4M2.500 10.500h4M11.500 4.500h4M11.500 6.500h4M11.500 8.500h4M11.500 10.500h4" /></svg>
        </button>
        <button type="button" aria-label="인쇄 모양" className="flex h-full w-[52px] items-center justify-center bg-[#c6c6c6]">
          <svg viewBox="0 0 18 17" className="h-[17px] w-[18px] fill-none stroke-[#6d6d6d]"><path d="M.5.5h17v16H.5zM3 4h12M3 7h12M3 10h12M3 13h12" strokeWidth="1.300" /></svg>
        </button>
        <button type="button" aria-label="웹 모양" className="flex w-[52px] justify-center">
          <svg viewBox="0 0 18 17" className="h-[17px] w-[18px] fill-none stroke-[#777]"><path d="M9 13.500H.5V1.500h15V6M3 4.500h10M3 7.500h8M3 10.500h5" /><circle cx="13" cy="12" r="4" fill="#777" /><path d="M11 10l3 2-1 3" stroke="#fff" /></svg>
        </button>
        <button type="button" aria-label="축소" className="ml-[7px] h-0.5 w-[11px] bg-[#666]" />
        <input type="range" min={10} max={200} defaultValue={95} aria-label="확대/축소" className="mx-1.5 h-[15px] w-[131px] appearance-none bg-[linear-gradient(#b5b5b5,#b5b5b5)] bg-[length:100%_1px] bg-center bg-no-repeat [&::-webkit-slider-thumb]:h-[15px] [&::-webkit-slider-thumb]:w-1.5 [&::-webkit-slider-thumb]:appearance-none [&::-webkit-slider-thumb]:bg-[#6d6d6d]" />
        <button type="button" aria-label="확대" className="flex w-[11px] justify-center">
          <svg viewBox="0 0 11 11" className="h-[11px] w-[11px] stroke-[#666] stroke-[1.500]"><path d="M0 5.500h11M5.500 0v11" /></svg>
        </button>
        <span className="mr-2.5 ml-[14px]">90%</span>
      </div>
    </footer>
  );
}

const symbolRows = [
  "⌒ ① ② ③ ④ ⑤ ⑥ ⑦ ⑧ ⑨ ⑩ ⑪ ⑫ ⑬ ⑭ ⑮",
  "⑴ ⑵ ⑶ ⑷ ⑸ ⑹ ⑺ ⑻ ⑼ ⑽ ⑾ ⑿ ⒀ ⒁ ⒂ ⒜",
  "⒝ ⒞ ⒟ ⒠ ⒡ ⒢ ⒣ ⒤ ⒥ ⒦ ⒧ ⒨ ⒩ ⒪ ⒫ ⒬",
  "⒭ ⒮ ⒯ ⒰ ⒱ ⒲ ⒳ ⒴ ⒵ ⓐ ⓑ ⓒ ⓓ ⓔ ⓕ ⓖ",
];
const recentSymbols = "② ③ ① ○ · △ ※ ■ → ↑ α ↓ ⑥ ⑤ ④ ⑺";

function glyphSize(s: string) {
  if (s === "⌒") return "align-top pt-1 text-base";
  return /[①-⑳]/.test(s) ? "text-[32px]" : /[ⓐ-ⓩ]/.test(s) ? "text-[32px]" : "text-[29px]";
}

function Chevron({ className = "" }: { className?: string }) {
  return (
    <span className={`pointer-events-none absolute right-0 flex w-[23px] items-center justify-center border border-[#ababab] bg-[#e1e1e1] ${className}`}>
      <svg viewBox="0 0 10 6" className="h-1.5 w-2.5 fill-none stroke-[#555]"><path d="m.5.5 4.500 5 4.500-5" /></svg>
    </span>
  );
}

function SymbolDialog() {
  const button = "flex items-center justify-center border border-[#adadad] bg-[#e1e1e1] whitespace-nowrap";
  return (
    <div role="dialog" aria-label="기호" className="absolute top-[305px] left-[608px] z-10 w-[719px] border border-[#777] bg-[#f0f0f0] pb-[11px] text-[17px] text-black shadow-[0_4px_18px_rgba(0,0,0,0.4)]">
      <div className="flex h-[38px] items-center bg-white pl-2.5">
        <h3 className="flex-1">기호</h3>
        <button type="button" aria-label="도움말" className="w-[60px] text-[19px]">?</button>
        <button type="button" aria-label="닫기" className="flex w-[60px] justify-center">
          <svg viewBox="0 0 14 14" className="h-[14px] w-[14px] fill-none stroke-black"><path d="m.5.5 13 13M13.500.5l-13 13" /></svg>
        </button>
      </div>
      <div className="mx-2.5 mt-2.5 flex items-end">
        <button type="button" className="relative z-10 -mb-px flex h-[35px] w-[76px] items-center justify-center border border-b-0 border-[#dcdcdc] bg-white">기호(<u>S</u>)</button>
        <button type="button" className="flex h-8 w-[109px] items-center justify-center border border-b-0 border-l-0 border-[#dcdcdc]">특수 문자(<u>P</u>)</button>
      </div>
      <div className="mx-2.5 flex flex-col border border-[#dcdcdc] bg-white px-[11px] pt-[14px] pb-3">
        <div className="flex items-center">
          <label htmlFor="font" className="w-[55px] whitespace-nowrap">글꼴(<u>F</u>):</label>
          <span className="relative">
            <input id="font" defaultValue="나눔스퀘어_ac" className="h-[31px] w-[290px] border border-[#ababab] pb-1 pl-1" />
            <Chevron className="inset-y-0" />
          </span>
          <label htmlFor="subset" className="ml-[13px] w-24 whitespace-nowrap">하위 집합(<u>U</u>):</label>
          <span className="relative">
            <select id="subset" className="h-[34px] w-[220px] appearance-none border border-[#ababab] pl-1"><option>괄호 영숫자</option></select>
            <Chevron className="inset-y-0" />
          </span>
        </div>
        <div className="mt-1.5 flex">
          <div className="border-y-2 border-l border-[#8a8f96] pl-px">
            <table className="h-[167px] w-[617px] table-fixed border-collapse leading-none">
              <tbody>
                {symbolRows.map((row, r) => (
                  <tr key={r}>
                    {row.split(" ").map((s, c) => (
                      <td key={s} className={`h-[41px] overflow-hidden border-r border-b border-black p-0 text-center leading-none last:border-r-0 ${glyphSize(s)} ${r === 0 && c === 2 ? "bg-[#0078d7] text-white" : ""}`}>{s}</td>
                    ))}
                  </tr>
                ))}
              </tbody>
            </table>
          </div>
          <div className="flex w-[21px] flex-col items-center bg-[#f0f0f0] py-2">
            <svg viewBox="0 0 10 6" className="h-1.5 w-2.5 fill-none stroke-[#555] stroke-2"><path d="m.5 5.500 4.500-5 4.500 5" /></svg>
            <span className="mt-[19px] h-[22px] w-full bg-[#cdcdcd]" />
            <svg viewBox="0 0 10 6" className="mt-auto h-1.5 w-2.5 fill-none stroke-[#555] stroke-2"><path d="m.5.5 4.500 5 4.500-5" /></svg>
          </div>
        </div>
        <p className="mt-3 leading-[25px]">최근에 사용한 기호(<u>R</u>):</p>
        <div className="mt-1 w-[621px] border border-[#8a8f96] p-px">
          <table className="h-[43px] w-full table-fixed border-collapse leading-none">
            <tbody>
              <tr>
                {recentSymbols.split(" ").map((s) => <td key={s} className={`border-r border-black p-0 text-center leading-none last:border-r-0 ${glyphSize(s)}`}>{s}</td>)}
              </tr>
            </tbody>
          </table>
        </div>
        <div className="mt-2 flex">
          <div className="w-[273px] leading-[26px]">
            <p className="mb-1.5">유니코드 이름:</p>
            <p className="text-base leading-[26px]">Circled Digit Two</p>
          </div>
          <div className="flex flex-1 items-center whitespace-nowrap">
            <label htmlFor="code" className="w-[95px]">문자 코드(<u>C</u>):</label>
            <input id="code" defaultValue="2461" className="h-8 w-[67px] border border-[#ababab] pb-1 pl-0.5 text-base" />
            <label htmlFor="base" className="ml-3 w-[63px]">기준(<u>M</u>):</label>
            <span className="relative">
              <select id="base" className="h-[34px] w-[163px] appearance-none border border-[#ababab] pl-[3px]"><option>유니코드(16진수)</option></select>
              <Chevron className="inset-y-0" />
            </span>
          </div>
        </div>
        <div className="mt-1.5 flex items-center">
          <button type="button" className={`h-[35px] w-[122px] ${button}`}>자동 고침(<u>A</u>)...</button>
          <button type="button" className={`ml-[14px] h-[35px] w-[142px] ${button}`}>바로 가기 키(<u>K</u>)...</button>
          <span className="ml-[14px]">바로 가기 키: 2461, Alt+X</span>
        </div>
      </div>
      <div className="mt-[14px] flex justify-end gap-3 pr-2">
        <button type="button" className="flex h-[36px] w-[104px] items-center justify-center border-2 border-[#0078d7] bg-[#e1e1e1]">삽입(<u>I</u>)</button>
        <button type="button" className={`h-[36px] w-[104px] ${button}`}>취소</button>
      </div>
      <svg viewBox="0 0 12 12" className="absolute right-0 bottom-0 h-3 w-3 stroke-[#888] stroke-[1.500]"><path d="M0 12 12 0M5 12l7-7M9.500 12l2.500-2.500" /></svg>
    </div>
  );
}

function Step({ text, className }: { text: string; className: string }) {
  return <strong className={`absolute z-40 font-['Noto_Sans','Open_Sans',sans-serif] text-[58px] leading-[58px] font-bold text-[#ff0000] ${className}`}>{text}</strong>;
}

export default function App() {
  return (
    <main className="flex min-h-screen flex-col bg-white pt-px pr-[33px] font-['Noto_Sans_CJK_KR',sans-serif]">
      <WordWindow active="참조" pressed tabTips scrollbar collapse pageHeight="h-[82px]" ribbon={<References id="style-alt" />}>
        <Step text="Alt" className="top-[152px] right-[37px]" />
      </WordWindow>
      <div className="mt-[29px]">
        <WordWindow active="삽입" pressed scrollbar collapse pageHeight="h-[81px]" ribbon={<Insert tips />}>
          <Step text="N" className="top-[100px] right-[37px]" />
        </WordWindow>
      </div>
      <div className="mt-[28px]">
        <WordWindow active="삽입" marks caret pageHeight="h-[177px]" ribbon={<Insert open />}>
          <Step text="U" className="top-[203px] right-[39px]" />
        </WordWindow>
      </div>
      <div className="mt-9">
        <WordWindow active="참조" inactive collapse marks fullRuler pageHeight="h-[838px]" ribbon={<References id="style-m" />} status={<StatusBar />}>
          <Step text="M" className="top-[112px] right-[33px]" />
          <SymbolDialog />
        </WordWindow>
      </div>
    </main>
  );
}
